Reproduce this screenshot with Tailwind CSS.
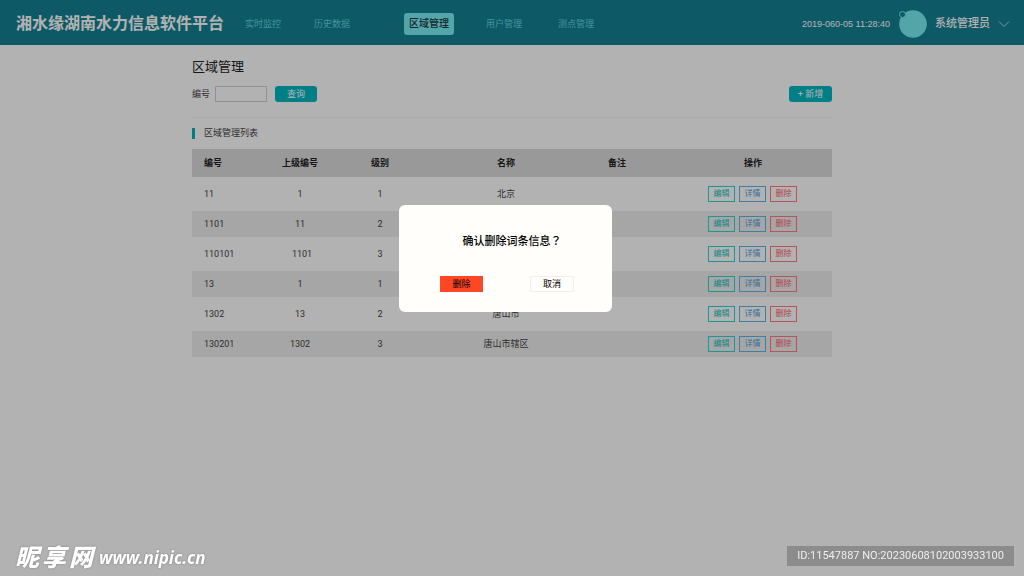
<!DOCTYPE html>
<html lang="zh-CN">
<head>
<meta charset="utf-8">
<title>区域管理</title>
<script src="https://cdn.jsdelivr.net/npm/@tailwindcss/browser@4"></script>
</head>
<body class="min-h-screen bg-white font-['Roboto','Noto_Sans_CJK_SC',sans-serif] text-[9px] leading-4 text-[#444]">

<header class="flex h-[45px] items-center bg-[#138193] pl-4 pr-[14px] pt-[3px] text-white">
  <div class="text-base font-bold leading-6">湘水缘湖南水力信息软件平台</div>
  <nav class="ml-[21px] flex items-center text-[#62d3dc]">
    <a href="#">实时监控</a>
    <a href="#" class="ml-[33px]">历史数据</a>
    <a href="#" class="ml-[54px] rounded-[3px] bg-[#79ecf4] px-[5px] py-[3px] text-[10px] font-medium text-[#1c3a3e]">区域管理</a>
    <a href="#" class="ml-8">用户管理</a>
    <a href="#" class="ml-9">测点管理</a>
  </nav>
  <div class="ml-auto flex items-center">
    <time class="font-['Liberation_Sans',sans-serif]">2019-060-05 11:28:40</time>
    <svg class="ml-[6px] h-7 w-[31px]" viewBox="0 0 31 28" aria-hidden="true">
      <circle cx="17" cy="14" r="13.8" fill="#79ecf4"/>
      <circle cx="6.5" cy="4.5" r="3" fill="#138193" stroke="#79ecf4"/>
    </svg>
    <button class="ml-2 flex items-center gap-2 text-[11px] font-medium">系统管理员
      <svg class="h-2 w-3" viewBox="0 0 12 8" fill="none" stroke="#a9dfe5" aria-hidden="true"><path d="M1 1.5 6 6.5 11 1.5"/></svg>
    </button>
  </div>
</header>

<main class="mx-auto max-w-[640px] pt-3">
  <h1 class="text-[13px] leading-5 text-[#222]">区域管理</h1>
  <form class="mt-[9px] flex h-4 items-center">
    <label for="code">编号</label>
    <input id="code" class="ml-[5px] h-4 w-[52px] border border-[#d0d0d0] px-1">
    <button type="button" class="ml-2 h-4 w-[42px] rounded-[3px] bg-[#00b7c2] text-white">查询</button>
    <button type="button" class="ml-auto h-4 w-[43px] rounded-[3px] bg-[#00b7c2] text-white">+ 新增</button>
  </form>
  <hr class="mt-[15px] border-[#f4f4f4]">
  <h2 class="mt-[7px] flex items-center gap-[9px]"><span class="h-[11px] w-[3px] bg-[#00b7c2]"></span>区域管理列表</h2>

  <table class="mt-2 w-full table-fixed text-center">
    <colgroup><col class="w-[68px]"><col class="w-20"><col class="w-20"><col class="w-[172px]"><col class="w-[50px]"><col></colgroup>
    <thead>
      <tr class="h-7 bg-[#dcdcdc] text-[#222]">
        <th class="pl-3 text-left">编号</th><th>上级编号</th><th>级别</th><th>名称</th><th>备注</th><th class="pl-8">操作</th>
      </tr>
    </thead>
    <tbody>
      <tr class="h-[34px]"><td class="pl-3 text-left">11</td><td>1</td><td>1</td><td>北京</td><td></td><td class="pl-[31px]"><div class="flex justify-center gap-1 text-[8px] leading-[14px]"><button class="w-[27px] border border-[#2fd3d3] text-[#10c4c4]">编辑</button><button class="w-[27px] border border-[#5fb4e8] text-[#4aa0dc]">详情</button><button class="w-[27px] border border-[#ff7c80] text-[#ff6468]">删除</button></div></td></tr>
      <tr class="h-[26px] bg-[#eee]"><td class="pl-3 text-left">1101</td><td>11</td><td>2</td><td></td><td></td><td class="pl-[31px]"><div class="flex justify-center gap-1 text-[8px] leading-[14px]"><button class="w-[27px] border border-[#2fd3d3] text-[#10c4c4]">编辑</button><button class="w-[27px] border border-[#5fb4e8] text-[#4aa0dc]">详情</button><button class="w-[27px] border border-[#ff7c80] text-[#ff6468]">删除</button></div></td></tr>
      <tr class="h-[34px]"><td class="pl-3 text-left">110101</td><td class="pl-1">1101</td><td>3</td><td></td><td></td><td class="pl-[31px]"><div class="flex justify-center gap-1 text-[8px] leading-[14px]"><button class="w-[27px] border border-[#2fd3d3] text-[#10c4c4]">编辑</button><button class="w-[27px] border border-[#5fb4e8] text-[#4aa0dc]">详情</button><button class="w-[27px] border border-[#ff7c80] text-[#ff6468]">删除</button></div></td></tr>
      <tr class="h-[26px] bg-[#eee]"><td class="pl-3 text-left">13</td><td>1</td><td>1</td><td></td><td></td><td class="pl-[31px]"><div class="flex justify-center gap-1 text-[8px] leading-[14px]"><button class="w-[27px] border border-[#2fd3d3] text-[#10c4c4]">编辑</button><button class="w-[27px] border border-[#5fb4e8] text-[#4aa0dc]">详情</button><button class="w-[27px] border border-[#ff7c80] text-[#ff6468]">删除</button></div></td></tr>
      <tr class="h-[34px]"><td class="pl-3 text-left">1302</td><td>13</td><td>2</td><td>唐山市</td><td></td><td class="pl-[31px]"><div class="flex justify-center gap-1 text-[8px] leading-[14px]"><button class="w-[27px] border border-[#2fd3d3] text-[#10c4c4]">编辑</button><button class="w-[27px] border border-[#5fb4e8] text-[#4aa0dc]">详情</button><button class="w-[27px] border border-[#ff7c80] text-[#ff6468]">删除</button></div></td></tr>
      <tr class="h-[26px] bg-[#eee]"><td class="pl-3 text-left">130201</td><td>1302</td><td>3</td><td>唐山市辖区</td><td></td><td class="pl-[31px]"><div class="flex justify-center gap-1 text-[8px] leading-[14px]"><button class="w-[27px] border border-[#2fd3d3] text-[#10c4c4]">编辑</button><button class="w-[27px] border border-[#5fb4e8] text-[#4aa0dc]">详情</button><button class="w-[27px] border border-[#ff7c80] text-[#ff6468]">删除</button></div></td></tr>
    </tbody>
  </table>
</main>

<!-- Modal backdrop and confirmation dialog -->
<div class="fixed inset-0 flex items-start justify-center bg-black/30 pr-[13px] pt-[205px]">
  <div role="dialog" aria-modal="true" aria-labelledby="confirm" class="w-[213px] rounded-md bg-[#fffefa] pb-5 pl-[41px] pr-[38px] pt-[27px] text-black">
    <h2 id="confirm" class="pl-[10px] text-center text-[11px] font-medium whitespace-nowrap">确认删除词条信息<span lang="zh-TW" class="font-['Noto_Sans_CJK_TC',sans-serif]">？</span></h2>
    <div class="mt-[26px] flex justify-between">
      <button class="h-4 w-[43px] bg-[#ff4726]">删除</button>
      <button class="h-4 w-11 border border-[#f0f0ee] leading-[14px]">取消</button>
    </div>
  </div>
</div>

<!-- Watermarks -->
<footer class="fixed inset-x-0 bottom-0 flex items-center justify-between pb-2 pl-[15px] pr-[10px]">
  <div class="flex items-center gap-[6px] italic text-white text-shadow-[0_0_2px_#777]">
    <span class="flex gap-[3px] text-[24px] font-black leading-5 font-['Noto_Sans_CJK_SC',sans-serif]"><span>昵</span><span>享</span><span>网</span></span>
    <span class="pt-1 font-['Noto_Sans',sans-serif] text-[17px] font-bold leading-5">www.nipic.cn</span>
  </div>
  <div class="bg-[#8c8c8c] px-[10px] text-[11px] leading-5 text-[#eee]">ID:11547887 NO:20230608102003933100</div>
</footer>
</body>
</html>
